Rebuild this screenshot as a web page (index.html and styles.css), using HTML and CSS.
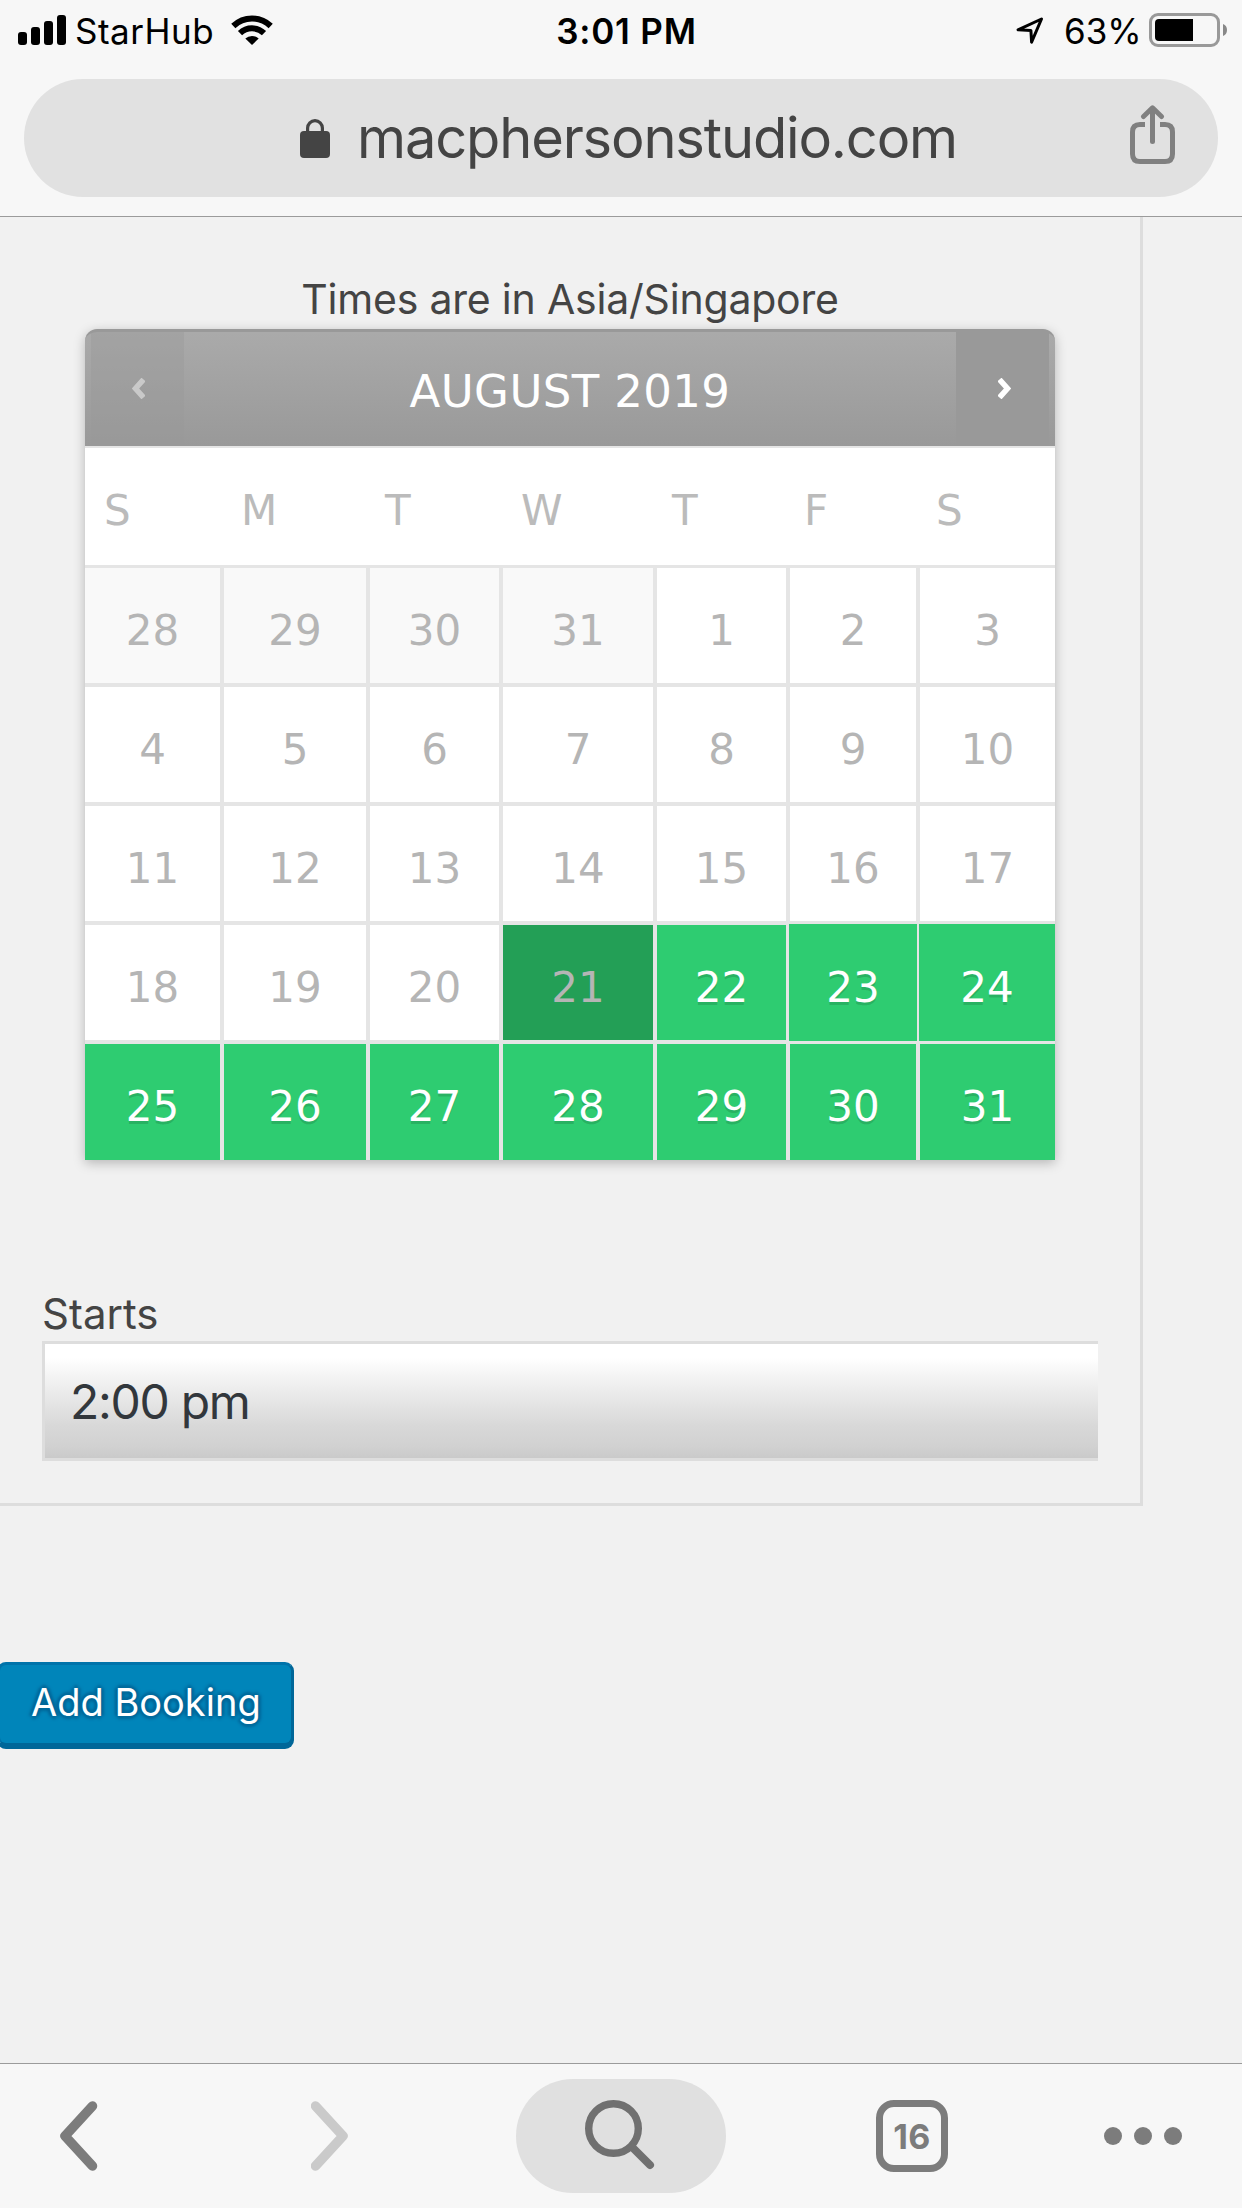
FILE: index.html
```html
<!DOCTYPE html>
<html lang="en">

<head>
    <meta charset="UTF-8">
    <meta name="viewport" content="width=device-width, initial-scale=1.0">
    <title>Macpherson Studio - Booking</title>
    <link rel="stylesheet" href="styles.css">
</head>

<body>
    <div class="top-bar">
        <div class="status">
            <div class="status-left">
                <svg class="signal" width="48" height="30" viewBox="0 0 48 30">
                    <rect x="0" y="17" width="9" height="13" rx="3"/>
                    <rect x="13" y="12" width="9" height="18" rx="3"/>
                    <rect x="26" y="6" width="9" height="24" rx="3"/>
                    <rect x="39" y="0" width="9" height="30" rx="3"/>
                </svg>
                <span class="carrier">StarHub</span>
                <svg class="wifi" width="42" height="30" viewBox="0 0 42 30">
                    <path d="M2.3 11 A27 27 0 0 1 39.7 11" fill="none" stroke="#000" stroke-width="6"/>
                    <path d="M9 18.2 A17.2 17.2 0 0 1 33 18.2" fill="none" stroke="#000" stroke-width="6"/>
                    <path d="M14.3 23.6 A9.6 9.6 0 0 1 27.7 23.6 L21 30 Z"/>
                </svg>
            </div>
            <div class="time">3:01 PM</div>
            <div class="status-right">
                <svg class="location" width="28" height="28" viewBox="0 0 28 28">
                    <path d="M2 12.8 L25.5 2 L15.6 25.2 L14.9 13.4 Z" fill="none" stroke="#000" stroke-width="3" stroke-linejoin="round"/>
                </svg>
                <span class="percent">63%</span>
                <svg class="battery" width="79" height="34" viewBox="0 0 79 34">
                    <rect x="1.5" y="1.5" width="68" height="31" rx="7.5" fill="none" stroke="#999" stroke-width="3"/>
                    <path d="M10 6 H44 V28 H10 Q6 28 6 24 V10 Q6 6 10 6 Z"/>
                    <path d="M74 11 Q78 12.5 78 17 Q78 21.5 74 23 Z" fill="#888"/>
                </svg>
            </div>
        </div>
        <div class="address">
            <svg class="lock" width="30" height="39" viewBox="0 0 30 39">
                <rect x="0" y="12" width="30" height="27" rx="4" fill="#444"/>
                <path d="M7.6 13 V9 A7.4 7.4 0 0 1 22.4 9 V13" fill="none" stroke="#444" stroke-width="3.2"/>
            </svg>
            <span class="url">macphersonstudio.com</span>
            <svg class="share" width="46" height="60" viewBox="0 0 46 60" fill="none" stroke="#808080" stroke-width="5">
                <path d="M15 19.5 H10 Q2.5 19.5 2.5 27 V49 Q2.5 56.5 10 56.5 H35 Q42.5 56.5 42.5 49 V27 Q42.5 19.5 35 19.5 H30"/>
                <path d="M22.5 36.5 V4 M13.5 11.5 L22.5 2.8 L31.5 11.5" stroke-linecap="round" stroke-linejoin="round"/>
            </svg>
        </div>
    </div>

    <div class="page">
        <div class="booking-box">
            <div class="timezone">Times are in Asia/Singapore</div>

            <div class="calendar">
                <div class="cal-header">
                    <div class="nav prev">
                        <svg width="13" height="21" viewBox="0 0 13 21"><path d="M11.5 1.5 L3.5 10.5 L11.5 19.5"/></svg>
                    </div>
                    <div class="month">AUGUST 2019</div>
                    <div class="nav next">
                        <svg width="13" height="21" viewBox="0 0 13 21"><path d="M1.5 1.5 L9.5 10.5 L1.5 19.5"/></svg>
                    </div>
                </div>
                <div class="weekdays">
                    <span>S</span><span>M</span><span>T</span><span>W</span><span>T</span><span>F</span><span>S</span>
                </div>
                <div class="days">
                    <div class="day other">28</div>
                    <div class="day other">29</div>
                    <div class="day other">30</div>
                    <div class="day other">31</div>
                    <div class="day">1</div>
                    <div class="day">2</div>
                    <div class="day">3</div>
                    <div class="day">4</div>
                    <div class="day">5</div>
                    <div class="day">6</div>
                    <div class="day">7</div>
                    <div class="day">8</div>
                    <div class="day">9</div>
                    <div class="day">10</div>
                    <div class="day">11</div>
                    <div class="day">12</div>
                    <div class="day">13</div>
                    <div class="day">14</div>
                    <div class="day">15</div>
                    <div class="day">16</div>
                    <div class="day">17</div>
                    <div class="day">18</div>
                    <div class="day">19</div>
                    <div class="day">20</div>
                    <div class="day today">21</div>
                    <div class="day free">22</div>
                    <div class="day free wide">23</div>
                    <div class="day free wide last">24</div>
                    <div class="day free">25</div>
                    <div class="day free">26</div>
                    <div class="day free">27</div>
                    <div class="day free">28</div>
                    <div class="day free">29</div>
                    <div class="day free">30</div>
                    <div class="day free">31</div>
                </div>
            </div>

            <div class="label">Starts</div>
            <div class="select"><span>2:00 pm</span></div>
        </div>

        <button class="add-btn"><span>Add Booking</span></button>
    </div>

    <div class="bottom-bar">
        <svg class="back" width="40" height="70" viewBox="0 0 40 70"><path d="M32.5 5 L5 35 L32.5 65"/></svg>
        <svg class="forward" width="40" height="70" viewBox="0 0 40 70"><path d="M4.5 5 L32 35 L4.5 65"/></svg>
        <div class="search">
            <svg width="70" height="70" viewBox="0 0 70 70" fill="none" stroke="#707070">
                <circle cx="28.5" cy="28.5" r="24.8" stroke-width="7.4"/>
                <path d="M47.5 47.5 L65 65" stroke-width="8" stroke-linecap="round"/>
            </svg>
        </div>
        <div class="tabs"><span>16</span></div>
        <div class="more"><i></i><i></i><i></i></div>
    </div>
</body>

</html>
```

FILE: styles.css
```css
* {
    box-sizing: border-box;
}

body {
    margin: 0;
    width: 1242px;
    height: 2208px;
    display: flex;
    flex-direction: column;
    overflow: hidden;
    font-family: Inter, "Liberation Sans", sans-serif;
    background-color: #f1f1f1;
    color: #444;
}

svg {
    display: block;
    flex: none;
}

span {
    white-space: nowrap;
}

/* browser top */
.top-bar {
    height: 217px;
    flex: none;
    background-color: #f7f7f7;
    border-bottom: 1px solid #9b9b9b;
}

.status {
    display: grid;
    grid-template-columns: 1fr 160px 1fr;
    height: 79px;
    padding: 0 14px 0 18px;
    color: #000;
    font-size: 35px;
    line-height: 62px;
}

.status-left,
.status-right {
    display: flex;
    align-items: flex-start;
}

.status-right {
    justify-content: flex-end;
}

.signal,
.wifi {
    margin-top: 15px;
}

.carrier {
    width: 137px;
    margin: 0 19px 0 9px;
    letter-spacing: 0.5px;
}

.time {
    padding-left: 7px;
    text-align: center;
    font-weight: 600;
    letter-spacing: 0.8px;
    white-space: nowrap;
}

.location {
    margin-top: 17px;
    margin-right: 20px;
}

.percent {
    width: 74px;
    margin-right: 11px;
}

.battery {
    margin-top: 13px;
}

.address {
    display: flex;
    align-items: flex-start;
    height: 118px;
    margin: 0 24px;
    padding-left: 276px;
    border-radius: 59px;
    background-color: #e1e1e1;
}

.lock {
    margin-top: 40px;
}

.url {
    width: 599px;
    margin-left: 27px;
    font-size: 56px;
    letter-spacing: -1.15px;
    line-height: 119px;
}

.share {
    margin-top: 26px;
    margin-left: 174px;
}

/* page */
.page {
    flex: 1;
}

.booking-box {
    width: 1143px;
    height: 1289px;
    padding: 58px 42px 0;
    border-right: 3px solid #ddd;
    border-bottom: 3px solid #ddd;
}

.timezone {
    height: 54px;
    text-align: center;
    font-size: 41px;
    letter-spacing: -0.2px;
    line-height: 48px;
}

.calendar {
    width: 970px;
    margin: 0 auto;
    border-radius: 12px 12px 0 0;
    background-color: #e5e5e5;
    box-shadow: 0 3px 12px rgba(0, 0, 0, 0.25);
    font-family: "DejaVu Sans", Verdana, sans-serif;
    font-size: 42px;
}

.cal-header {
    display: flex;
    height: 117px;
    padding: 0 6px;
    border-top: 3px solid #999;
    border-radius: 12px 12px 0 0;
    background: linear-gradient(#aaa, #999);
    color: #fff;
}

.nav {
    width: 93px;
    padding-top: 46px;
    background-color: #999;
}

.nav svg {
    margin-left: 42px;
    fill: none;
    stroke: #fff;
    stroke-width: 5.5;
}

.prev {
    background-color: rgba(153, 153, 153, 0.4);
}

.prev svg {
    margin-left: 41px;
    opacity: 0.45;
}

.month {
    flex: 1;
    text-align: center;
    font-size: 45px;
    letter-spacing: 0.4px;
    line-height: 119px;
}

.weekdays {
    display: grid;
    grid-template-columns: 137px 144px 136px 151px 132px 132px 1fr;
    height: 117px;
    margin-top: 2px;
    padding-left: 19px;
    background-color: #fff;
    color: #bbb;
    line-height: 126px;
}

.days {
    display: grid;
    grid-template-columns: 135px 142px 129px 150px 129px 126px 135px;
    grid-template-rows: 115px 115px 115px 115px 116px;
    gap: 4px;
    padding-top: 3px;
}

.day {
    background-color: #fff;
    color: #b5b5b5;
    text-align: center;
    line-height: 126px;
}

.other {
    background-color: #f9f9f9;
}

.today {
    background-color: #239f56;
}

.free {
    background-color: #2ecc71;
    color: #fff;
    text-shadow: 0 3px 0 rgba(0, 0, 0, 0.12);
}

.wide {
    margin: -1px;
    line-height: 128px;
}

.last {
    margin-right: 0;
}

.label {
    margin-top: 130px;
    height: 51px;
    font-size: 42px;
    line-height: 48px;
}

.select {
    height: 120px;
    padding-left: 25px;
    border: 3px solid #ddd;
    border-right: none;
    background: linear-gradient(#fff 0%, #fff 12%, #f4f4f4 28%, #e6e6e6 50%, #d8d8d8 72%, #d1d1d1 90%, #cacaca 100%);
    color: #32373c;
    font-size: 48px;
    letter-spacing: -1.3px;
    line-height: 116px;
}

.add-btn {
    display: block;
    width: 297px;
    height: 84px;
    margin: 156px 0 0 -3px;
    padding: 0 0 4px 31px;
    border: 3px solid #0073aa;
    border-bottom-color: #006799;
    border-right-color: #006799;
    border-radius: 9px;
    background-color: #0085ba;
    box-shadow: 0 3px 0 #006799;
    color: #fff;
    font-family: inherit;
    font-size: 38px;
    line-height: 74px;
    text-align: left;
    text-shadow: 0 -3px 3px #006799, 3px 0 3px #006799, 0 3px 3px #006799, -3px 0 3px #006799;
}

/* browser bottom */
.bottom-bar {
    display: flex;
    flex: none;
    align-items: flex-start;
    height: 145px;
    padding-left: 60px;
    background-color: #f7f7f7;
    border-top: 1px solid #9b9b9b;
}

.back,
.forward {
    margin-top: 37px;
    fill: none;
    stroke: #7c7c7c;
    stroke-width: 9.5;
    stroke-linecap: round;
    stroke-linejoin: round;
}

.forward {
    margin-left: 211px;
    stroke: #cacaca;
}

.search {
    width: 210px;
    height: 114px;
    margin: 15px 0 0 165px;
    padding: 21px 0 0 69px;
    border-radius: 57px;
    background-color: #e0e0e0;
}

.tabs {
    width: 72px;
    height: 72px;
    margin: 36px 0 0 150px;
    border: 7px solid #7c7c7c;
    border-radius: 18px;
    color: #7c7c7c;
    font-size: 34px;
    font-weight: 700;
    letter-spacing: 0.5px;
    line-height: 60px;
    text-align: center;
}

.more {
    display: flex;
    gap: 12px;
    margin: 63px 0 0 156px;
}

.more i {
    width: 18px;
    height: 18px;
    border-radius: 50%;
    background-color: #7c7c7c;
}
```
